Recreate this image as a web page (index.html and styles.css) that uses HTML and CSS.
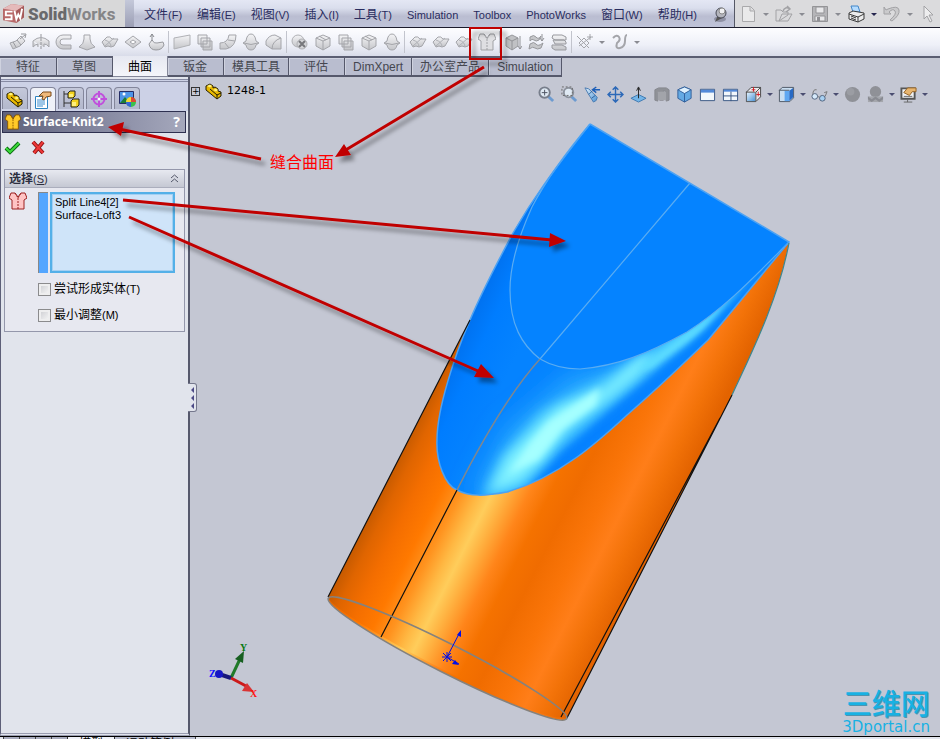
FILE: index.html
```
<!DOCTYPE html>
<html lang="zh-CN">
<head>
<meta charset="utf-8">
<title>SolidWorks</title>
<link rel="stylesheet" href="styles.css">
</head>
<body>
<svg class="defs" aria-hidden="true">
  <defs>
    <linearGradient id="gm" x1="0" y1="0" x2="0" y2="1"><stop offset="0" stop-color="#f4f4f6"/><stop offset="1" stop-color="#c4c5c9"/></linearGradient>
    <linearGradient id="gb" x1="0" y1="0" x2="1" y2="1"><stop offset="0" stop-color="#e2f2ff"/><stop offset="1" stop-color="#4b93d4"/></linearGradient>
  </defs>
  <symbol id="i-part" viewBox="0 0 18 18"><path d="M1 4l4-2 3 2v2l2-1 3 2v2l3 1v4l-4 3-11-9z" fill="#e8b800" stroke="#221c00"/><path d="M2 4l3-1.500 2 1.500-2 1.500zM8 8l3-1.500 2 1.500-2 1.500z" fill="#fff27a"/><path d="M5 7l7 6v3M12 13l4-2" fill="none" stroke="#221c00"/></symbol>
  <symbol id="i-knit" viewBox="0 0 18 18"><path d="M2 1h4l3 4 3-4h4l2 5-3 2v9H3V8L0 6z"/><path d="M6 1l3 5 3-5M9 6v11" fill="none" stroke-dasharray="2 1"/></symbol>
  <symbol id="i-extrude" viewBox="0 0 18 18"><path d="M1 10l6-2 5-5 4 5-5 5-7 3z" fill="url(#gm)" stroke="#a4a5aa"/><path d="M4 9l3 5M8 7l4 5M11 6l5-4M12 1l5 0-1 4" fill="none" stroke="#98999e"/></symbol>
  <symbol id="i-revolve" viewBox="0 0 18 18"><path d="M1 8q8-7 16 0v6q-2-3-5-3v3M1 8v6q3-3 5-3v3" fill="url(#gm)" stroke="#a4a5aa"/><path d="M9 1v16" stroke="#95969b" stroke-dasharray="3 1"/></symbol>
  <symbol id="i-sweep" viewBox="0 0 18 18"><path d="M16 2H8a6.500 6.500 0 0 0 0 14h8v-4H8a2 2 0 0 1 0-6h8z" fill="url(#gm)" stroke="#a4a5aa"/></symbol>
  <symbol id="i-loft" viewBox="0 0 18 18"><path d="M6 2h6v4q0 5 5 8l-8 3-8-3q5-3 5-8z" fill="url(#gm)" stroke="#a4a5aa"/></symbol>
  <symbol id="i-wave" viewBox="0 0 18 18"><path d="M1 9l5-5q3-1 5 2l6 0-4 7q-3 2-6 0l-3 1z" fill="url(#gm)" stroke="#a4a5aa"/><path d="M4 13l9-8M10 14q0-5-6-7" fill="none" stroke="#aeb0b5"/></symbol>
  <symbol id="i-plane" viewBox="0 0 18 18"><path d="M1 9l8-6 8 6-8 6z" fill="url(#gm)" stroke="#a4a5aa"/><path d="M6 9l3-2 3 2-3 2z" fill="#fff" stroke="#a4a5aa"/></symbol>
  <symbol id="i-up" viewBox="0 0 18 18"><path d="M2 11l3-4q2 4 5 3l6-1 1 3q-2 5-8 5t-7-6z" fill="url(#gm)" stroke="#98999e"/><path d="M5 8V1M3 4l2-3 2 3" fill="none" stroke="#888a8f"/></symbol>
  <symbol id="i-sheet" viewBox="0 0 18 18"><path d="M1 5l16-3v10L1 16z" fill="url(#gm)" stroke="#b0b1b5"/></symbol>
  <symbol id="i-copy" viewBox="0 0 18 18"><path d="M2 2h9v9H2zM5 5h9v9H5zM7 8h9v9H7z" fill="url(#gm)" stroke="#a4a5aa"/></symbol>
  <symbol id="i-bend" viewBox="0 0 18 18"><path d="M10 2l7 0q0 12-10 14l-6 0v-6q8 0 9-8zM9 7l7 1M6 10l4 5" fill="url(#gm)" stroke="#a4a5aa"/></symbol>
  <symbol id="i-ball" viewBox="0 0 18 18"><path d="M4 8q1-7 5-7t5 7l3 2-3 2q-1 5-5 5t-5-5l-3-2z" fill="url(#gm)" stroke="#a4a5aa"/><path d="M2 10q7 3 14 0" fill="none" stroke="#a4a5aa"/></symbol>
  <symbol id="i-fillet" viewBox="0 0 18 18"><path d="M1 8q3-6 9-6l6 3v11H7l-6-4z" fill="url(#gm)" stroke="#a4a5aa"/><path d="M7 16q0-8 9-11" fill="none" stroke="#a4a5aa"/></symbol>
  <symbol id="i-del" viewBox="0 0 18 18"><circle cx="7" cy="8" r="6" fill="url(#gm)" stroke="#b0b1b5"/><circle cx="11" cy="11" r="5" fill="#d4d5d8" stroke="#b0b1b5"/><path d="M8 8l6 6M14 8l-6 6" stroke="#77787c" stroke-width="2"/></symbol>
  <symbol id="i-box" viewBox="0 0 18 18"><path d="M2 5l7-3 7 3v8l-7 4-7-4z" fill="url(#gm)" stroke="#a4a5aa"/><path d="M2 5l7 3 7-3M9 8v9M5 3l7 4" fill="none" stroke="#a4a5aa"/></symbol>
  <symbol id="i-thick" viewBox="0 0 18 18"><path d="M2 5l6-3 6 3v8l-6 4-6-4z" fill="#c0c1c4" stroke="#97989c"/><path d="M2 5l6 3 6-3M8 8v9M16 3v13M14 13l2 3 2-3" fill="none" stroke="#929397"/></symbol>
  <symbol id="i-stack" viewBox="0 0 18 18"><path d="M3 2h9l4 2v3H5L2 5zM3 7l11 0 2 2v2H5zM2 12h10l4 2v3H5l-3-2z" fill="url(#gm)" stroke="#98999e"/></symbol>
  <symbol id="i-layers" viewBox="0 0 18 18"><path d="M3 4q4-3 6 0t5-1l-2 4q-3 2-5 0t-4 1zM3 11q4-3 6 0t7-1l-2 5q-4 2-6 0t-6 1z" fill="#c6c7ca" stroke="#97989c"/><path d="M15 1v7M13 5l2 3 2-3" fill="none" stroke="#929397"/></symbol>
  <symbol id="i-ref" viewBox="0 0 18 18"><path d="M1 3l12 12M3 13L15 4M8 5l5 5-5 5-5-5z" fill="none" stroke="#a4a5aa"/><path d="M14 1v6M11 4h6" stroke="#a4a5aa"/></symbol>
  <symbol id="i-curve" viewBox="0 0 18 18"><path d="M2 5q4-4 6-1t-2 6q-2 6 3 5t5-7 2-6" fill="none" stroke="#a4a5aa" stroke-width="2"/></symbol>
  <symbol id="i-zoom" viewBox="0 0 18 18"><path d="M11 11l5 5" stroke="#6d9bd0" stroke-width="3"/><circle cx="7" cy="7" r="5.500" fill="#dfe9f3" stroke="#777e8b" stroke-width="2"/><path d="M4 7h6M7 4v6" stroke="#4a5260"/></symbol>
  <symbol id="i-zoomarea" viewBox="0 0 18 18"><path d="M11 11l5 5" stroke="#6d9bd0" stroke-width="3"/><circle cx="8" cy="7" r="5" fill="#dfe9f3" stroke="#8b919c" stroke-width="2"/><path d="M1 1h11v9H1z" fill="none" stroke="#666" stroke-dasharray="2 2"/></symbol>
  <symbol id="i-prev" viewBox="0 0 18 18"><path d="M1 2l4 1 9 9q0 4-4 5L5 9z" fill="url(#gb)" stroke="#487ab0"/><path d="M5 9l4-4M8 13l4-3" stroke="#2a5d99"/><path d="M10 4h7M13 1l-4 3 4 3" fill="none" stroke="#1d5fb8" stroke-width="1.500"/></symbol>
  <symbol id="i-pan" viewBox="0 0 18 18"><path d="M9 1v16M1 9h16M6 4l3-3 3 3M6 14l3 3 3-3M4 6L1 9l3 3M14 6l3 3-3 3" fill="none" stroke="#2c69b8" stroke-width="1.500"/></symbol>
  <symbol id="i-normal" viewBox="0 0 18 18"><path d="M1 13l8-4 8 4-8 4z" fill="#73b5e8" stroke="#3f78b0"/><path d="M9 13V2M7 5l2-4 2 4" fill="none" stroke="#222"/></symbol>
  <symbol id="i-section" viewBox="0 0 18 18"><path d="M2 4l4-2h8l3 2v11l-3 1V6l-3-1v10H7V6L5 7v9l-3-1z" fill="#8f9197" stroke="#85878d"/><path d="M5 6h9v9H5z" fill="#a2a4aa"/></symbol>
  <symbol id="i-cube" viewBox="0 0 18 18"><path d="M9 1l7 3v9l-7 4-7-4V4z" fill="#65aae4" stroke="#315f9a"/><path d="M9 1l7 3-7 4-7-4z" fill="#dff2ff" stroke="#315f9a"/><path d="M9 8v9" stroke="#315f9a"/></symbol>
  <symbol id="i-win1" viewBox="0 0 18 18"><path d="M1.500 3.500h15v12h-15z" fill="#f2f7fc" stroke="#365482"/><path d="M2 4h14v3H2z" fill="#5289d9"/></symbol>
  <symbol id="i-win4" viewBox="0 0 18 18"><path d="M1.500 3.500h15v12h-15z" fill="#f2f7fc" stroke="#365482"/><path d="M2 4h14v2H2z" fill="#5289d9"/><path d="M1 10.500h16M9.500 6v10" stroke="#365482"/></symbol>
  <symbol id="i-orient" viewBox="0 0 18 18"><path d="M1.500 6.500l5-5h10v10l-5 5H1.500z" fill="#e9eaed" stroke="#444"/><path d="M2 7h9v9H2z" fill="url(#gb)"/><path d="M11.500 16V6.500l5-5M1 6.500h10" stroke="#444" fill="none"/><path d="M9 1v5M7 4h4M14 6v5M12 9h4" stroke="#d21d24"/></symbol>
  <symbol id="i-display" viewBox="0 0 18 18"><path d="M1.500 4.500l3-3h12v11l-4 4h-11z" fill="#c9def1" stroke="#4d5765"/><path d="M7 5h5v11H7z" fill="#5fa7f1"/><path d="M12 16V5l4-3v10z" fill="#2769c4"/><path d="M1 4.500h11" stroke="#4d5765"/></symbol>
  <symbol id="i-glasses" viewBox="0 0 18 18"><circle cx="4" cy="11" r="3" fill="#d6eafb" stroke="#50627c"/><circle cx="12" cy="13" r="3" fill="#a7d0f2" stroke="#50627c"/><path d="M2 9q0-6 4-5M7 11l2 1M15 11l2-5-3 1" fill="none" stroke="#777"/></symbol>
  <symbol id="i-sphere" viewBox="0 0 18 18"><circle cx="9" cy="9" r="8" fill="#8f9197"/><circle cx="7" cy="6" r="4" fill="#9b9da3"/></symbol>
  <symbol id="i-scene" viewBox="0 0 18 18"><circle cx="9" cy="6" r="6" fill="#8f9197"/><path d="M1 11h16v6H1z" fill="#a4a6ac"/><path d="M1 11l4 3 4-3 4 3 4-3v3l-4 3-4-3-4 3-4-3z" fill="#898b92"/></symbol>
  <symbol id="i-screen" viewBox="0 0 18 18"><path d="M1.500 2.500h14v11h-14z" fill="#f1f2f4" stroke="#555" stroke-width="2"/><path d="M8 14v3M4 17h9M4 11h9" stroke="#666"/><path d="M4 7l4-5h9v4l-4 0-3 4z" fill="#e8b56e" stroke="#936224"/></symbol>
  <symbol id="i-new" viewBox="0 0 18 18"><path d="M3.500 1.500h8l4 4v11h-12zM11 2v4h4" fill="#e9e9ea" stroke="#a9a9ab"/></symbol>
  <symbol id="i-open" viewBox="0 0 18 18"><path d="M1 16V5h5l2 2h5v3L4 16zM4 16l3-7h10l-4 7z" fill="#dadadc" stroke="#a2a2a5"/><path d="M8 6q2-5 7-2M12 1l3 3-4 3" fill="none" stroke="#a2a2a5" stroke-width="1.500"/></symbol>
  <symbol id="i-save" viewBox="0 0 18 18"><path d="M1.500 1.500h15v15h-15z" fill="#b5b5b8" stroke="#949497"/><path d="M5 2h8v6H5zM4 11h10v5H4z" fill="#e8e8ea" stroke="#949497"/><path d="M6 12h3v4H6z" fill="#909094"/></symbol>
  <symbol id="i-print" viewBox="0 0 18 18"><path d="M4 1h7l2 6H6z" fill="#b5dcff" stroke="#4286c8"/><path d="M2 8l4-2 11 2v6l-6 3-9-3z" fill="#ececec" stroke="#3b3b3b"/><path d="M2 9l9 3 6-3M11 12v5M4 11l5 2M4 13l5 2" fill="none" stroke="#3b3b3b"/></symbol>
  <symbol id="i-undo" viewBox="0 0 18 18"><path d="M1 2v7h7L6 7q4-4 6-1t-5 9l2 1q8-6 7-11T5 4L3 5z" fill="#cacacc" stroke="#a2a2a5"/></symbol>
  <symbol id="i-cursor" viewBox="0 0 18 18"><path d="M5 1v13l3-3 3 6 2-1-3-6h4z" fill="#ededee" stroke="#a2a2a5"/></symbol>
  <symbol id="i-tri" viewBox="0 0 8 8"><path d="M1 3h6L4 6z"/></symbol>
</svg>

<header class="menubar">
  <div class="brand">
    <svg class="brand-mark" viewBox="0 0 22 22" aria-hidden="true"><path d="M0 6L9 1l13 2v12l-8 6L0 18z" fill="#b86868"/><path d="M0 6L9 1l13 2-8 5z" fill="#e5baba"/><path d="M14 8l8-5v12l-8 6z" fill="#a65a5a"/><path d="M10 9H3v4h6v4H2M12 8l2 9 2-5 2 4 2-10" fill="none" stroke="#fff" stroke-width="2"/></svg>
    <span class="brand-name"><b>Solid</b>Works</span>
  </div>
  <nav class="menus">
    <a href="#">文件<small>(F)</small></a><a href="#">编辑<small>(E)</small></a><a href="#">视图<small>(V)</small></a><a href="#">插入<small>(I)</small></a><a href="#">工具<small>(T)</small></a><a href="#"><small>Simulation</small></a><a href="#"><small>Toolbox</small></a><a href="#"><small>PhotoWorks</small></a><a href="#">窗口<small>(W)</small></a><a href="#">帮助<small>(H)</small></a>
    <svg class="pin" viewBox="0 0 14 16" aria-hidden="true"><ellipse cx="7" cy="12" rx="6" ry="3" fill="#8f91a4"/><path d="M5 8l4 3-7 4z" fill="#555"/><circle cx="8" cy="6" r="5" fill="#b4b5bd" stroke="#484a55"/><circle cx="9" cy="4" r="3" fill="#f0f0f2" stroke="#888"/></svg>
  </nav>
  <div class="quick">
    <button aria-label="新建"><svg><use href="#i-new"/></svg></button><svg class="tri"><use href="#i-tri"/></svg>
    <button aria-label="打开"><svg><use href="#i-open"/></svg></button><svg class="tri"><use href="#i-tri"/></svg>
    <button aria-label="保存"><svg><use href="#i-save"/></svg></button><svg class="tri"><use href="#i-tri"/></svg>
    <button aria-label="打印"><svg><use href="#i-print"/></svg></button><svg class="tri on"><use href="#i-tri"/></svg>
    <button aria-label="撤销"><svg><use href="#i-undo"/></svg></button><svg class="tri"><use href="#i-tri"/></svg>
    <button aria-label="选择"><svg><use href="#i-cursor"/></svg></button>
  </div>
</header>

<div class="toolbar" role="toolbar" aria-label="曲面">
  <button aria-label="拉伸曲面"><svg><use href="#i-extrude"/></svg></button><button aria-label="旋转曲面"><svg><use href="#i-revolve"/></svg></button><button aria-label="扫描曲面"><svg><use href="#i-sweep"/></svg></button><button aria-label="放样曲面"><svg><use href="#i-loft"/></svg></button><button aria-label="边界曲面"><svg><use href="#i-wave"/></svg></button><button aria-label="填充曲面"><svg><use href="#i-plane"/></svg></button><button aria-label="自由形"><svg><use href="#i-up"/></svg></button>
  <i class="sep"></i>
  <button aria-label="平面区域"><svg><use href="#i-sheet"/></svg></button><button aria-label="等距曲面"><svg><use href="#i-copy"/></svg></button><button aria-label="直纹曲面"><svg><use href="#i-bend"/></svg></button><button aria-label="中面"><svg><use href="#i-ball"/></svg></button><button aria-label="圆角"><svg><use href="#i-fillet"/></svg></button>
  <i class="sep"></i>
  <button aria-label="删除面"><svg><use href="#i-del"/></svg></button><button aria-label="替换面"><svg><use href="#i-box"/></svg></button><button aria-label="移动面"><svg><use href="#i-copy"/></svg></button><button aria-label="删除孔"><svg><use href="#i-box"/></svg></button><button aria-label="分型面"><svg><use href="#i-ball"/></svg></button>
  <i class="sep"></i>
  <button aria-label="延伸曲面"><svg><use href="#i-wave"/></svg></button><button aria-label="剪裁曲面"><svg><use href="#i-wave"/></svg></button><button aria-label="解除剪裁"><svg><use href="#i-wave"/></svg></button><button class="knit" aria-label="缝合曲面"><svg><use href="#i-knit"/></svg></button>
  <i class="sep"></i>
  <button aria-label="加厚"><svg><use href="#i-thick"/></svg></button><button aria-label="加厚切除"><svg><use href="#i-layers"/></svg></button><button aria-label="使用曲面切除"><svg><use href="#i-stack"/></svg></button>
  <i class="sep"></i>
  <button aria-label="参考几何体"><svg><use href="#i-ref"/></svg></button><svg class="tri"><use href="#i-tri"/></svg><button aria-label="曲线"><svg><use href="#i-curve"/></svg></button><svg class="tri"><use href="#i-tri"/></svg>
</div>

<nav class="tabs">
  <a href="#">特征</a><a href="#">草图</a><a href="#" class="active">曲面</a><a href="#">钣金</a><a href="#" class="tight">模具工具</a><a href="#">评估</a><a href="#" class="tight">DimXpert</a><a href="#" class="tight">办公室产品</a><a href="#" class="tight">Simulation</a>
</nav>

<main class="workspace">
  <aside class="panel">
    <div class="panel-tabs">
      <button aria-label="特征树"><svg><use href="#i-part"/></svg></button>
      <button class="active" aria-label="属性"><svg viewBox="0 0 18 18"><path d="M1.500 5.500h12v12h-12z" fill="#fff" stroke="#2c83c0"/><path d="M3 9h8M3 11h8M3 13h8M3 15h6" stroke="#3d8ed0"/><path d="M5 5l4-4h8v4l-5 1-2 3-2-1 1-3z" fill="#efb97b" stroke="#7c4b1b"/></svg></button>
      <button aria-label="配置"><svg viewBox="0 0 18 18"><path d="M2 1v16M2 4h5M2 13h7" stroke="#333" fill="none"/><path d="M6 3l2-2h5v5l-2 2H6zM9 11l2-2h6v6l-2 2H9z" fill="#f3d21f" stroke="#222"/><path d="M7 4h4v3H7zM10 12h4v4h-4z" fill="#fff07c"/></svg></button>
      <button aria-label="尺寸"><svg viewBox="0 0 18 18"><circle cx="9" cy="9" r="5.500" fill="none" stroke="#c050dc" stroke-width="2"/><path d="M9 1v16M1 9h16" stroke="#c050dc" stroke-width="2"/><circle cx="9" cy="9" r="1.500" fill="#fff"/></svg></button>
      <button aria-label="外观"><svg viewBox="0 0 18 18"><path d="M1.500 1.500h14v12h-14z" fill="#4d95e8" stroke="#252d66"/><path d="M2 13l5-6 5 6z" fill="#1b7e37"/><circle cx="6" cy="4" r="1.500" fill="#fff"/><circle cx="13" cy="12" r="5" fill="#3ac14c"/><path d="M13 12V7a5 5 0 0 0-5 5z" fill="#f2d93a"/><path d="M13 12V7a5 5 0 0 1 5 5z" fill="#e04734"/><path d="M13 12H8a5 5 0 0 0 5 5z" fill="#3664d8"/></svg></button>
    </div>
    <h1 class="feature"><svg class="knit-gold"><use href="#i-knit"/></svg><span>Surface-Knit2</span><button aria-label="帮助">?</button></h1>
    <div class="confirm">
      <button aria-label="确定"><svg viewBox="0 0 17 17"><path d="M2 9l4 4 9-9" fill="none" stroke="#0b6a12" stroke-width="4"/><path d="M2 9l4 4 9-9" fill="none" stroke="#3ddc3b" stroke-width="2"/></svg></button>
      <button aria-label="取消"><svg viewBox="0 0 17 17"><path d="M3 3l10 11M13 3L4 14" fill="none" stroke="#8f1212" stroke-width="4"/><path d="M3 3l10 11M13 3L4 14" fill="none" stroke="#ee3838" stroke-width="2"/></svg></button>
    </div>
    <section class="group">
      <h2><span>选择<small>(<u>S</u>)</small></span><svg viewBox="0 0 9 9" aria-hidden="true"><path d="M1 4l3.500-3L8 4M1 8l3.500-3L8 8" fill="none" stroke="#54586a"/></svg></h2>
      <div class="picker">
        <svg class="knit-pink"><use href="#i-knit"/></svg>
        <i class="bar"></i>
        <ul><li>Split Line4[2]</li><li>Surface-Loft3</li></ul>
      </div>
      <label><input type="checkbox"><span>尝试形成实体<small>(T)</small></span></label>
      <label><input type="checkbox"><span>最小调整<small>(M)</small></span></label>
    </section>
    <button class="grip" aria-label="折叠面板"><svg viewBox="0 0 5 24"><path d="M4 1v6L1 4zM4 9v6l-3-3zM4 17v6l-3-3z" fill="#4c4a86"/></svg></button>
  </aside>

  <section class="viewport">
    <svg class="scene" role="img" aria-label="1248-1">
      <defs>
        <linearGradient id="orange" gradientUnits="userSpaceOnUse" x1="328" y1="598" x2="567" y2="717">
          <stop offset="0" stop-color="#c65a00"/><stop offset=".05" stop-color="#e06500"/><stop offset=".12" stop-color="#f46e00"/><stop offset=".2" stop-color="#ff7900"/><stop offset=".27" stop-color="#ff9420"/><stop offset=".33" stop-color="#ffb843"/><stop offset=".375" stop-color="#ffcd5b"/><stop offset=".42" stop-color="#ffb443"/><stop offset=".5" stop-color="#ff851a"/><stop offset=".57" stop-color="#f57200"/><stop offset=".65" stop-color="#f06c00"/><stop offset=".76" stop-color="#fa7509"/><stop offset=".84" stop-color="#ff7e19"/><stop offset=".92" stop-color="#f27208"/><stop offset="1" stop-color="#e36300"/>
        </linearGradient>
        <linearGradient id="bluedge" gradientUnits="userSpaceOnUse" x1="455" y1="345" x2="510" y2="370"><stop offset="0" stop-color="#0070ee"/><stop offset=".4" stop-color="#007dff"/><stop offset="1" stop-color="#0583ff"/></linearGradient>
        <filter id="b3" x="-30%" y="-30%" width="160%" height="160%"><feGaussianBlur stdDeviation="3"/></filter>
        <filter id="b6" x="-30%" y="-30%" width="160%" height="160%"><feGaussianBlur stdDeviation="6"/></filter>
        <filter id="b13" x="-40%" y="-40%" width="180%" height="180%"><feGaussianBlur stdDeviation="12"/></filter>
        <clipPath id="loft"><path d="M590 124C552 172 532 200 513 233C490 276 478 301 470 320C455 355 437 408 437 440C436 462 445 485 457 490C470 497 485 496 507 492C560 477 600 440 627 415C665 382 690 357 708 340L789 242z"/></clipPath>
      </defs>
      <g transform="translate(-190 -77)">
        <ellipse cx="447.500" cy="658.500" rx="133.500" ry="14.500" transform="rotate(26.800 447.500 658.500)" fill="url(#orange)" class="base"/>
        <path d="M470 320L328 597C332 608 381 637 440 668C500 699 552 721 567 718L732 395C747 362 778 302 789 242L590 124z" fill="url(#orange)"/>
        <g clip-path="url(#loft)">
          <path d="M430 110h370v400H430z" fill="url(#bluedge)"/>
          <path d="M470 500L505 430L570 375L640 360L789 235L700 345L600 430L520 490z" fill="#25a7ff" filter="url(#b13)"/>
          <path d="M480 500L500 458L540 412L600 380L650 350L720 303L690 335L630 388L560 445L522 490z" fill="#49cbff" filter="url(#b6)"/>
          <path d="M490 492L508 456L540 424L558 407L605 388L640 357L655 354L637 375L604 401L568 427L544 458L520 480z" fill="#82f3ff" filter="url(#b6)"/>
          <path d="M509 473L530 443L548 422L600 388L596 405L562 430L538 460z" fill="#a5ffff" filter="url(#b3)"/>
          <path d="M636 370L700 322L745 284L704 331L652 368z" fill="#5edfff" filter="url(#b3)"/>
          <path d="M789 246L708 343L627 418L560 472L530 490L562 453L612 409L690 345z" fill="#007bff" opacity=".75" filter="url(#b3)"/>
        </g>
        <path d="M590 124C562 157 544 184 532 207C518 238 510 265 510 290C510 325 522 345 540 359C552 366 567 369 580 369C617 366 647 354 687 332C727 306 752 279 789 242z" fill="#0583ff"/>
        <path d="M590 124C562 157 544 184 532 207C518 238 510 265 510 290C510 325 522 345 540 359C552 366 567 369 580 369C617 366 647 354 687 332C727 306 752 279 789 242M690 183L540 359" fill="none" stroke="#5aacf2" stroke-width="1.200"/>
        <path d="M590 124C552 172 532 200 513 233C490 276 478 301 470 320C455 355 437 408 437 440C436 462 445 485 457 490C470 497 485 496 507 492C560 477 600 440 627 415C665 382 690 357 708 340L789 242L590 124" fill="none" stroke="#4ba2f4" stroke-width="1.500"/>
        <path d="M789 243C778 302 747 362 732 395" fill="none" stroke="#3d8790" stroke-width="1.200"/>
        <path d="M470 320L328 597M457 490L381 637M732 395L567 718M720 418L561 717" fill="none" stroke="#111" stroke-width="1.200"/>
        <path d="M540 359C520 381 493 419 457 490" fill="none" stroke="#7e8790" stroke-width="1.500"/>
        <ellipse cx="447.500" cy="658.500" rx="133.500" ry="14.500" transform="rotate(26.800 447.500 658.500)" fill="none" stroke="#85827d" stroke-width="1.700"/>
        <path d="M447 657l13-25M447 657l12 7M443 653l8 8M443 661l8-8M442 657h10M447 652v10" fill="none" stroke="#0010e8"/>
        <path d="M461 630l0 7-4-2zM459 665l-7-1 3-4z" fill="#0010e8"/>
        <path d="M231 678l9-19" stroke="#217a29" stroke-width="3"/><path d="M244 651l-9 8 8 4z" fill="#175f20"/>
        <path d="M231 678l15 8" stroke="#cc1a1a" stroke-width="3"/><path d="M254 692l-12-1 5-8z" fill="#d93434"/>
        <path d="M231 678l-9-3" stroke="#17177a" stroke-width="4"/><circle cx="219" cy="674" r="4" fill="#1616c4"/>
        <g class="axis"><text x="240" y="651" fill="#087a10">Y</text><text x="250" y="697" fill="#ff1010">X</text><text x="209" y="677" fill="#1010ff">Z</text></g>
      </g>
    </svg>
    <div class="tree"><span class="plus">+</span><svg><use href="#i-part"/></svg><span>1248-1</span></div>
    <div class="view-tools">
      <button aria-label="整屏显示"><svg><use href="#i-zoom"/></svg></button><button aria-label="局部放大"><svg><use href="#i-zoomarea"/></svg></button><button aria-label="上一视图"><svg><use href="#i-prev"/></svg></button><button aria-label="平移"><svg><use href="#i-pan"/></svg></button><button aria-label="正视于"><svg><use href="#i-normal"/></svg></button><button aria-label="剖面视图"><svg><use href="#i-section"/></svg></button><button aria-label="等轴测"><svg><use href="#i-cube"/></svg></button><button aria-label="单一视图"><svg><use href="#i-win1"/></svg></button><button aria-label="四视图"><svg><use href="#i-win4"/></svg></button><button aria-label="视图定向"><svg><use href="#i-orient"/></svg></button><svg class="tri"><use href="#i-tri"/></svg><button aria-label="显示样式"><svg><use href="#i-display"/></svg></button><svg class="tri"><use href="#i-tri"/></svg><button aria-label="隐藏项目"><svg><use href="#i-glasses"/></svg></button><svg class="tri"><use href="#i-tri"/></svg><button aria-label="外观"><svg><use href="#i-sphere"/></svg></button><button aria-label="布景"><svg><use href="#i-scene"/></svg></button><svg class="tri"><use href="#i-tri"/></svg><button aria-label="视图设定"><svg><use href="#i-screen"/></svg></button><svg class="tri"><use href="#i-tri"/></svg>
    </div>
    <div class="watermark"><strong>三维网</strong><span>3Dportal.cn</span></div>
  </section>
</main>

<footer class="sheets">
  <i></i><i></i><i></i><i></i><a href="#" class="active">模型</a><a href="#">运动算例 1</a><span></span>
</footer>

<svg class="notes" aria-hidden="true">
  <defs><filter id="sh" x="-20%" y="-20%" width="150%" height="150%"><feDropShadow dx="4" dy="5" stdDeviation="2" flood-color="#000" flood-opacity=".4"/></filter></defs>
  <g filter="url(#sh)" fill="#c00000" stroke="#c00000">
    <path d="M470 28h31v31h-31z" fill="none" stroke-width="2"/>
    <path d="M484 67L344 151M261 159L119 129M123 200L552 240M129 217L478 371" fill="none" stroke-width="3"/>
    <path d="M335 157l9-13 7 11zM108 127l16-5-3 14zM566 241l-17 6 1-14zM494 378l-20-1 7-13z" stroke="none"/>
  </g>
  <text class="note" x="270" y="168">缝合曲面</text>
</svg>
</body>
</html>
```
FILE: styles.css
```
* { box-sizing: border-box; }
body {
  margin: 0;
  height: 100vh;
  position: relative;
  display: flex;
  flex-direction: column;
  overflow: hidden;
  background: #c4c7d3;
  color: #000;
  font: 12px/16px "Liberation Sans", "Noto Sans CJK SC", sans-serif;
}
a { color: inherit; text-decoration: none; }
small { font-size: 11px; }
button { border: 0; padding: 0; background: none; font: inherit; display: flex; align-items: center; justify-content: center; }
.defs { position: absolute; width: 0; height: 0; }
.tri { width: 8px; height: 8px; fill: #8a8b92; flex: none; }

.menubar { display: flex; height: 28px; flex: none; background: linear-gradient(#e4e7f4, #dadeed 30%, #babdd1 60%, #bfc3d8); border-bottom: 1px solid #1c1c2c; }
.brand { width: 125px; display: flex; align-items: center; gap: 4px; padding-left: 3px; background: #d8d8d9; }
.brand-mark { width: 21px; height: 21px; }
.brand-name { color: #858587; font: bold 17px/20px Roboto, sans-serif; }
.brand-name b { color: #69696b; font-weight: 900; }
.menus { flex: 1; display: flex; align-items: center; gap: 15px; padding: 2px 7px 0 10px; color: #292c5e; white-space: nowrap; border: solid transparent; border-image: linear-gradient(#c6cadb, #9a9db3) 1; border-width: 0 0 0 9px; }
.pin { width: 14px; height: 16px; margin-left: auto; }
.quick { width: 206px; display: flex; align-items: center; padding-left: 4px; background: #dbdbdd; border-left: 1px solid #555866; }
.quick button { width: 18px; margin-right: 5px; }
.quick button svg { width: 18px; height: 18px; }
.quick .tri { margin-right: 5px; }
.quick .on { fill: #26264f; }

.toolbar { display: flex; align-items: center; height: 30px; flex: none; padding-left: 6px; background: linear-gradient(#fdfdff, #eef0f8 60%, #d9dce9); border-bottom: 2px solid #5b5e72; }
.toolbar button { width: 23px; height: 26px; }
.toolbar button svg { width: 18px; height: 18px; }
.toolbar .tri { margin: 0 2px; }
.sep { width: 1px; height: 22px; margin: 0 1px; background: #c2c4cd; }
.knit svg { fill: #dfdfe2; stroke: #a0a1a5; }

.tabs { display: flex; align-items: flex-start; height: 20px; flex: none; position: relative; z-index: 1; margin-bottom: -1px; }
.tabs a { height: 19px; padding: 0 16px 0 15px; line-height: 18px; color: #45474f; background: #b9bdcf; border-right: 1px solid #55586b; border-bottom: 2px solid #55586b; box-shadow: inset 1px 1px #cfd2df; }
.tabs .tight { padding: 0 8px; }
.tabs a:first-child { padding: 0 16px; }
.tabs .active { height: 22px; margin-top: -2px; padding: 2px 15px 0; color: #000; background: linear-gradient(#e6e8f1, #f4f5fa); box-shadow: none; border-color: #85889a; }

.workspace { flex: 1; display: flex; min-height: 0; }
.panel { position: relative; z-index: 1; width: 190px; flex: none; background: #e1e4ec; border-left: 1px solid #5d5f78; border-right: 2px solid #55586c; border-bottom: 3px double #9a9db1; }
.panel-tabs { display: flex; gap: 2px; height: 32px; padding: 5px 1px 0; background: #ccd1e6; border-top: 3px double #868aa3; margin-top: 2px; }
.panel-tabs button { width: 26px; height: 22px; background: linear-gradient(#c4c8da, #b3b8cd); border: 1px solid #83869b; border-bottom: 0; border-radius: 4px 4px 0 0; }
.panel-tabs .active { background: #eff1f8; height: 24px; }
.panel-tabs svg { width: 18px; height: 18px; }
.feature { display: flex; align-items: center; gap: 2px; height: 22px; margin: 0 2px 0 1px; padding: 0 5px 0 2px; border: 1px solid #2e3050; background: linear-gradient(90deg, #5f627c, #8a8da5 60%, #a5a8bc); color: #fff; font: bold 12px/20px "Open Sans", sans-serif; }
.feature button { margin-left: auto; color: #fff; font-size: 14px; }
.knit-gold { width: 16px; height: 18px; fill: #ffc928; stroke: #855300; }
.confirm { display: flex; gap: 9px; height: 36px; padding: 6px 3px; }
.confirm svg { width: 17px; height: 17px; }
.confirm button { height: 17px; }
.group { margin: 0 3px; padding-bottom: 8px; border: 1px solid #9497ab; background: #e7e8f0; }
.group h2 { display: flex; align-items: center; justify-content: space-between; height: 18px; margin: 0 0 4px; padding: 0 5px 0 4px; font-size: 12px; color: #2c2f40; background: linear-gradient(#e7e9f0, #c5c8d3); border-bottom: 1px solid #abaebd; }
.group h2 small { font-weight: normal; }
.group h2 svg { width: 9px; height: 9px; }
.picker { display: flex; height: 81px; margin: 0 9px 8px 4px; }
.knit-pink { width: 18px; height: 18px; fill: #ffc4c4; stroke: #9c2020; }
.bar { width: 10px; margin: 0 2px 0 11px; background: #54a6ff; border-top: 1px solid #888; border-left: 1px solid #888; }
.picker ul { flex: 1; margin: 0; padding: 2px 3px; list-style: none; font-size: 11px; line-height: 13px; background: #cfe4f9; border: 2px solid #54b0e8; box-shadow: inset 0 0 0 1px #a4d0f2; }
.group label { display: flex; align-items: center; gap: 3px; height: 16px; margin: 0 0 10px 33px; white-space: nowrap; }
.group label:last-of-type { margin-bottom: 0; }
.group input { appearance: none; width: 13px; height: 13px; margin: 0; border: 1px solid #8b8b8d; background: linear-gradient(135deg, #c9cacf, #fafafa); box-shadow: inset 0 0 0 2px #eeeeef; }
.grip { position: absolute; right: -9px; top: 306px; width: 9px; height: 29px; background: #e1e4ec; border: 1px solid #74778c; border-left: 0; border-radius: 0 3px 3px 0; }
.grip svg { width: 5px; height: 24px; }

.viewport { flex: 1; position: relative; min-width: 0; background: #c4c7d3; }
.scene { position: absolute; inset: 0; width: 100%; height: 100%; }
.axis { font: bold 10px "Liberation Serif", serif; }
.tree { position: absolute; left: 1px; top: 5px; display: flex; align-items: center; font: 11px/18px "DejaVu Sans", sans-serif; }
.tree svg { width: 18px; height: 18px; margin: 0 4px 0 5px; }
.plus { width: 9px; height: 9px; border: 1px solid #333; font: 9px/7px "DejaVu Sans", sans-serif; text-align: center; }
.view-tools { position: absolute; right: 10px; top: 6px; display: flex; align-items: center; }
.view-tools button { width: 23px; height: 22px; }
.view-tools button svg { width: 17px; height: 17px; }
.view-tools .tri { margin: 0 1px; fill: #4a4d70; }
.watermark { position: absolute; right: 10px; bottom: 3px; display: flex; flex-direction: column; align-items: center; gap: 2px; color: #18b1e3; }
.watermark strong { font: 500 29px/34px "Noto Sans CJK SC", sans-serif; text-shadow: 1px 1px #4f93ae; }
.watermark span { font: 15px/12px "DejaVu Sans", sans-serif; }

.sheets { display: flex; height: 3px; flex: none; overflow: hidden; border-top: 1px solid #000; background: #e1e4ec; }
.sheets i { width: 16px; height: 16px; border-left: 1px solid #444; background: #a9acbe; }
.sheets i:first-child { margin-left: 3px; }
.sheets a { height: 18px; padding: 0 11px; line-height: 14px; border-left: 1px solid #333; background: #b9bdcf; }
.sheets .active { background: #eff1f8; }
.sheets span { flex: 1; border-left: 1px solid #444; }

.notes { position: absolute; inset: 0; width: 100%; height: 100%; pointer-events: none; z-index: 2; }
.note { font: 16px "Noto Sans CJK SC", sans-serif; fill: #f00; }
```
